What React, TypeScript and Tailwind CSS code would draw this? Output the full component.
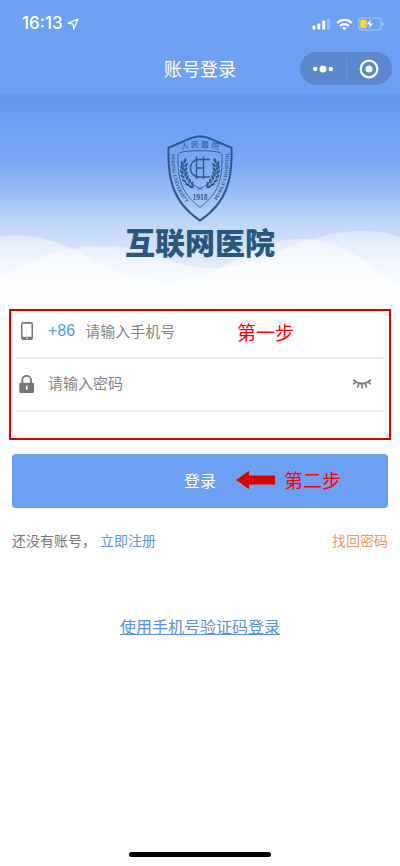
import type { ReactNode } from "react";

/**
 * Phone status bar: clock, location arrow, signal, wifi and battery
**/
function StatusBar() {
  return (
    <div className="flex h-12 items-center justify-between pl-[22px] pr-4">
      <div className="flex items-center gap-1 text-white">
        <span className="font-['Inter',sans-serif] text-[17px] font-medium">16:13</span>
        <svg width="12" height="12" viewBox="0 0 12 12" fill="none" stroke="currentColor" strokeWidth="1.3" strokeLinejoin="round">
          <path d="M11 1 1.2 5.2 6 6.1 6.8 11Z" />
        </svg>
      </div>

      <div className="flex items-center gap-[5px]">
        {/* Signal strength */}
        <svg width="19" height="12" viewBox="0 0 19 12" fill="white">
          <rect x="0.5" y="7.5" width="3" height="4" rx="0.8" />
          <rect x="5.3" y="5.5" width="3" height="6" rx="0.8" />
          <rect x="10.2" y="2.5" width="3" height="9" rx="0.8" />
          <rect x="15" y="0.5" width="3" height="11" rx="0.8" opacity="0.3" />
        </svg>
        {/* Wifi */}
        <svg width="17" height="13" viewBox="0 0 17 13" fill="none" stroke="white" strokeWidth="2.2">
          <path d="M1.2 4.9C5.2.8 11.8.8 15.8 4.9" />
          <path d="M4 8C6.5 5.5 10.5 5.5 13 8" />
          <path d="M6.1 9.9C7.5 8.7 9.5 8.7 10.9 9.9L8.5 12.4Z" fill="white" stroke="none" />
        </svg>
        {/* Battery, charging */}
        <svg width="26" height="14" viewBox="0 0 26 14">
          <rect x="0.7" y="1" width="22.3" height="12" rx="3" fill="none" stroke="white" strokeOpacity="0.45" strokeWidth="1.1" />
          <path d="M24.3 5v4c1-.4 1.4-1.2 1.4-2s-.4-1.6-1.4-2Z" fill="white" opacity="0.5" />
          <rect x="2.3" y="2.8" width="6.5" height="8.4" rx="1.2" fill="#f8d440" />
          <path d="M13.6 1.2 7.8 7.9h3.5L10.2 12.8 16 6.1h-3.6Z" fill="white" stroke="#6d9ff3" strokeWidth="0.8" />
        </svg>
      </div>
    </div>
  );
}

/**
 * Title bar with the mini program capsule on the right
**/
function NavBar() {
  return (
    <div className="grid h-[46px] grid-cols-[1fr_auto_1fr] items-start pr-2">
      <span />
      <h1 className="pl-2 pt-2 text-lg leading-6 text-white">账号登录</h1>
      <div className="mt-1 flex h-[33px] w-[92px] items-center justify-self-end rounded-full bg-[#5c88cf]">
        <button type="button" aria-label="更多" className="flex flex-1 justify-center">
          <svg width="22" height="8" viewBox="0 0 22 8" fill="white">
            <circle cx="3.2" cy="4" r="2.2" />
            <circle cx="11" cy="4" r="3.5" />
            <circle cx="18.8" cy="4" r="2.2" />
          </svg>
        </button>
        <span className="h-5 w-px bg-[#6a95da]" />
        <button type="button" aria-label="关闭" className="flex flex-1 justify-center">
          <svg width="20" height="20" viewBox="0 0 20 20">
            <circle cx="10" cy="10" r="8.3" fill="none" stroke="white" strokeWidth="2.2" />
            <circle cx="10" cy="10" r="3.5" fill="white" />
          </svg>
        </button>
      </div>
    </div>
  );
}

// Leaves of the left laurel branch: x, y, rotation
const leaves = [
  [18, 25.5, 20], [15.2, 28.5, -20], [19.2, 30, 35], [14.8, 32.5, -28], [18.6, 34.5, 35],
  [14.8, 37, -35], [19.2, 38.8, 25], [15.6, 41.5, -45], [20.4, 42.6, 15], [17.4, 46, -58],
  [22.6, 46, 5], [20.6, 49.6, -68], [25.4, 49.2, -10], [24.4, 52, -78],
];

function Branch() {
  return (
    <g>
      <path d="M17.5 26C14.5 37 18 48 35.5 54.5" fill="none" stroke="#2a5a8c" strokeWidth="0.8" />
      {leaves.map(([x, y, r]) => (
        <ellipse key={`${x}-${y}`} cx={x} cy={y} rx="1.2" ry="2.6" transform={`rotate(${r} ${x} ${y})`} fill="#2a5a8c" />
      ))}
    </g>
  );
}

function Crest() {
  return (
    <svg width="66" height="87" viewBox="0 0 66 87" role="img" aria-label="人民醫院">
      <defs>
        <path id="crest-top" d="M10 15.5Q33 9 56 15.5" />
        <path id="crest-left" d="M4.2 19C4 46 11 64 34 81" />
        <path id="crest-right" d="M34 80.5C56 64 62 46 62 17" />
      </defs>
      {/* Outer and inner shield */}
      <path d="M33 1.3C23 1.5 13 9 1.5 12.5C.5 42 5 67 33 85.5C61 67 65.5 42 64.5 12.5C53 9 43 1.5 33 1.3Z" fill="none" stroke="#2a5a8c" strokeWidth="2" />
      <path d="M13 17.5C22 15 44 15 53 17.5C54.5 18 55 19 55 20C55.5 44 52 58 33 72.5C14 58 10.5 44 11 20C11 19 11.5 18 13 17.5Z" fill="none" stroke="#2a5a8c" strokeWidth="0.9" />

      <g fill="#2a5a8c" className="font-['Liberation_Serif','Noto_Sans_CJK_SC',serif]">
        <text fontSize="8" textAnchor="middle">
          <textPath href="#crest-top" startOffset="50%">人 民 醫 院</textPath>
        </text>
        <text fontSize="5" fontWeight="700">
          <textPath href="#crest-left">PEKING  UNIVERSITY</textPath>
        </text>
        <text fontSize="5" fontWeight="700" textAnchor="end">
          <textPath href="#crest-right" startOffset="100%">PEOPLE'S  HOSPITAL</textPath>
        </text>
        <text x="33" y="65" fontSize="7.5" fontWeight="700" textAnchor="middle">1918</text>
      </g>

      <Branch />
      <g transform="translate(66 0) scale(-1 1)">
        <Branch />
      </g>

      {/* C and H monogram */}
      <path d="M43 24.5H32C20.5 24.5 20.5 42 32 42H43M29.5 21.5V44M36.5 21.5V44M29.5 33H36.5" fill="none" stroke="#2a5a8c" strokeWidth="1.4" />
    </svg>
  );
}

/**
 * Sky gradient with the overlapping waves, crest and site name
**/
function Hero() {
  return (
    <section className="relative bg-[linear-gradient(#6596f0,#6e9ff2_14%,#7ba8f3_32%,#98bbf5_45%,#bdd3f9_58%,#d6e4fb_72%,#eef4fd_88%,#ffffff)] pb-[51px] pt-[41px]">
      <svg className="absolute inset-0 h-full w-full" viewBox="0 0 400 215" preserveAspectRatio="none">
        <defs>
          <linearGradient id="wave" x1="0" y1="137" x2="0" y2="212" gradientUnits="userSpaceOnUse">
            <stop offset="0" stopColor="white" stopOpacity="0.35" />
            <stop offset="1" stopColor="white" stopOpacity="0.7" />
          </linearGradient>
        </defs>
        <g fill="url(#wave)">
          <path d="M0 142C28 139 50 144 78 157C108 172 132 188 170 188C221 188 245 145 302 145C340 145 365 165 400 196V215H0Z" />
          <path d="M0 182C35 164 65 152 105 152C148 152 172 174 213 174C265 174 300 137 362 137C377 137 389 139 400 143V215H0Z" />
        </g>
      </svg>
      <div className="relative flex flex-col items-center">
        <Crest />
        <p className="mt-[2px] text-3xl leading-[34px] font-black text-[#28567f]">互联网医院</p>
      </div>
    </section>
  );
}

function Field({ className, children }: { className: string; children: ReactNode }) {
  return <div className={`flex items-center border-b-2 border-[#eeeeee] ${className}`}>{children}</div>;
}

const inputClass = "min-w-0 flex-1 bg-transparent text-[15px] text-gray-700 outline-none placeholder:text-[#858585]";

function LoginForm() {
  return (
    <form onSubmit={(e) => e.preventDefault()}>
      {/* Step one: phone and password */}
      <div className="relative mx-[9px] border-2 border-[#d90000] px-[5px] pb-[26px]">
        <Field className="h-12 pb-[6px]">
          <label htmlFor="phone" className="flex items-center">
            <svg width="22" height="18" viewBox="0 0 22 18">
              <path fillRule="evenodd" d="M7 0h8a2 2 0 0 1 2 2v14a2 2 0 0 1-2 2H7a2 2 0 0 1-2-2V2a2 2 0 0 1 2-2ZM6.5 1.8v13h9v-13ZM10 15.7h2v1h-2Z" fill="#767676" />
            </svg>
            <span className="px-[10px] font-['Liberation_Sans',sans-serif] text-base text-[#559bea]">+86</span>
          </label>
          <input id="phone" type="tel" placeholder="请输入手机号" className={inputClass} />
        </Field>
        <Field className="h-[53px] pb-[2px]">
          <label htmlFor="password" aria-label="密码" className="pr-[10px]">
            <svg width="22" height="18" viewBox="0 0 22 18">
              <path d="M6.3 9V5.2a4.4 4.4 0 0 1 8.8 0V9" fill="none" stroke="#767676" strokeWidth="1.8" />
              <path fillRule="evenodd" d="M4.5 7.8h12.4a1.2 1.2 0 0 1 1.2 1.2v7.7a1.2 1.2 0 0 1-1.2 1.2H4.5a1.2 1.2 0 0 1-1.2-1.2V9a1.2 1.2 0 0 1 1.2-1.2ZM9.9 10.5v4.3h1.7v-4.3Z" fill="#767676" />
            </svg>
          </label>
          <input id="password" type="password" placeholder="请输入密码" className={inputClass} />
          <button type="button" aria-label="显示密码" className="pr-3">
            <svg width="20" height="12" viewBox="0 0 20 12" fill="none" stroke="#767676" strokeWidth="1.6" strokeLinecap="round">
              <path d="M1.5 2.2C6.5 6.8 13.5 6.8 18.5 2.2M3.8 4.2 1.5 5.8M6.8 5.5 5.6 9M10 6V10M13.2 5.5 14.4 9M16.2 4.2 18.5 5.8" />
            </svg>
          </button>
        </Field>
        <span className="pointer-events-none absolute left-[226px] top-[7px] text-[19px] leading-7 text-[#ff0000]">第一步</span>
      </div>

      {/* Step two: submit */}
      <div className="relative mx-3 mt-[14px]">
        <button type="submit" className="h-[54px] w-full rounded bg-[#6d9ff3] pb-[2px] text-base text-white">
          登录
        </button>
        <div className="pointer-events-none absolute inset-y-0 left-56 flex items-center gap-[9px] pb-[2px]">
          <svg width="39" height="18" viewBox="0 0 39 18" fill="#d90000">
            <path d="M0 9 13 0V4.5H39V13.5H13V18Z" />
          </svg>
          <span className="text-[19px] leading-7 text-[#ff0000]">第二步</span>
        </div>
      </div>
    </form>
  );
}

export default function App() {
  return (
    <div className="flex min-h-screen flex-col bg-white font-['Noto_Sans_CJK_SC',sans-serif]">
      <header className="bg-[#6d9ff3]">
        <StatusBar />
        <NavBar />
      </header>
      <Hero />
      <main className="flex flex-1 flex-col">
        <LoginForm />
        <div className="mt-[22px] flex justify-between px-3 text-sm leading-5">
          <p className="flex gap-1 text-[#777777]">
            还没有账号，
            <a href="#register" className="text-[#5b94e8]">立即注册</a>
          </p>
          <a href="#reset" className="text-[#e39a72]">找回密码</a>
        </div>
        <a href="#sms" className="mt-16 self-center text-base leading-6 text-[#5b90e0] underline">
          使用手机号验证码登录
        </a>
      </main>
      {/* Home indicator */}
      <div className="mb-[9px] h-[5px] w-[142px] self-center rounded-full bg-black" />
    </div>
  );
}
